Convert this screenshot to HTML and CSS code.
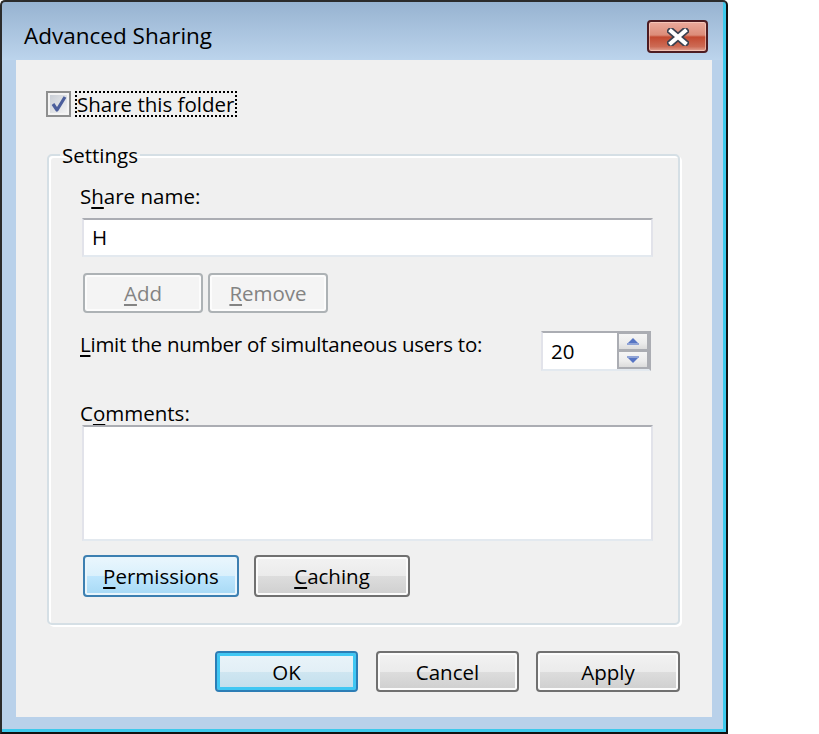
FILE: index.html
```html
<!DOCTYPE html>
<html>
<head>
<meta charset="utf-8">
<title>Advanced Sharing</title>
<link rel="stylesheet" href="styles.css">
</head>
<body>
<div class="window">
  <div class="titlebar">
    <span class="title">Advanced Sharing</span>
    <div class="close">
      <svg width="22" height="18" viewBox="0 0 22 18">
        <path d="M4 3 L18 15 M18 3 L4 15" stroke="#3b4150" stroke-width="7.5" stroke-linecap="square" fill="none"/>
        <path d="M4 3 L18 15 M18 3 L4 15" stroke="#ffffff" stroke-width="4" stroke-linecap="square" fill="none"/>
      </svg>
    </div>
  </div>
  <div class="client">
    <div class="check-row">
      <span class="checkbox">
        <svg width="25" height="26" viewBox="0 0 25 26">
          <defs>
            <linearGradient id="cbg" x1="0" y1="0" x2="1" y2="1">
              <stop offset="0" stop-color="#c9ced6"/>
              <stop offset="1" stop-color="#f2f2f2"/>
            </linearGradient>
          </defs>
          <rect x="1" y="1" width="23" height="24" fill="#f4f4f4" stroke="#8e8f8f" stroke-width="2"/>
          <rect x="4" y="4" width="17" height="18" fill="url(#cbg)"/>
          <path d="M7 13 L11 19 L19 6" stroke="#4b5e9c" stroke-width="3.2" fill="none" stroke-linejoin="round"/>
        </svg>
      </span>
      <span class="focus">Share this folder</span>
    </div>
    <fieldset class="group">
      <legend>Settings</legend>
      <div class="group-body">
        <div class="label first">S<u>h</u>are name:</div>
        <div class="textbox">H</div>
        <div class="btn-row small">
          <div class="btn disabled"><u>A</u>dd</div>
          <div class="btn disabled"><u>R</u>emove</div>
        </div>
        <div class="limit-row">
          <div class="label limit"><u>L</u>imit the number of simultaneous users to:</div>
          <div class="spin">
            <div class="spin-value">20</div>
            <div class="spin-btns">
              <div class="spin-btn">
                <svg width="12" height="7" viewBox="0 0 12 7"><path d="M6 0 L11 5 L1 5 Z" fill="#5775c4"/><rect x="0" y="5" width="12" height="2" fill="#8fa3d6"/></svg>
              </div>
              <div class="spin-btn">
                <svg width="12" height="7" viewBox="0 0 12 7"><rect x="0" y="0" width="12" height="2" fill="#8fa3d6"/><path d="M1 2 L11 2 L6 7 Z" fill="#5775c4"/></svg>
              </div>
            </div>
          </div>
        </div>
        <div class="label comments">C<u>o</u>mments:</div>
        <div class="textarea"></div>
        <div class="btn-row large">
          <div class="btn hot"><u>P</u>ermissions</div>
          <div class="btn"><u>C</u>aching</div>
        </div>
      </div>
    </fieldset>
    <div class="footer">
      <div class="btn default ok">OK</div>
      <div class="btn">Cancel</div>
      <div class="btn apply">Apply</div>
    </div>
  </div>
</div>
</body>
</html>
```

FILE: styles.css
```css
html, body {
  margin: 0;
  padding: 0;
  background: #ffffff;
}

body {
  font-family: "Open Sans", "Noto Sans", sans-serif;
  font-size: 20.5px;
  color: #000;
}

u {
  text-decoration-thickness: 2px;
  text-underline-offset: 3px;
}

.window {
  width: 728px;
  height: 734px;
  box-sizing: border-box;
  border-left: 2px solid #2b2b2b;
  border-top: 2px solid #2b2b2b;
  border-right: 2px solid #111;
  border-bottom: 2px solid #111;
  border-radius: 5px 5px 0 0;
  background: linear-gradient(to bottom, #97b3d1 0px, #bcd4ec 58px, #b9d1ea 58px, #b9d1ea 100%);
  box-shadow: inset -3px -3px 0 #3dc9eb;
  padding: 0 14px 15px 14px;
  display: flex;
  flex-direction: column;
}

.titlebar {
  height: 58px;
  display: flex;
  justify-content: space-between;
  align-items: flex-start;
  flex-shrink: 0;
}

.title {
  font-size: 22.5px;
  line-height: 28px;
  margin-top: 20px;
  margin-left: 8px;
  color: #000;
}

.close {
  width: 61px;
  height: 33px;
  box-sizing: border-box;
  margin-top: 18px;
  margin-right: 4px;
  border: 2px solid #4d1c22;
  border-radius: 4px;
  background: linear-gradient(to bottom, #eaaa9c 0%, #dc8c79 45%, #c34a31 52%, #cd6b55 85%, #e2a596 100%);
  box-shadow: inset 0 0 0 1px rgba(255, 220, 210, 0.55);
  display: flex;
  align-items: center;
  justify-content: center;
}

.close svg {
  display: block;
}

.client {
  flex: 1;
  background: #f0f0f0;
  padding: 31px 32px 0 30px;
  display: flex;
  flex-direction: column;
}

.check-row {
  display: flex;
  align-items: flex-start;
  height: 26px;
  gap: 4px;
}

.checkbox svg {
  display: block;
}

.focus {
  box-sizing: border-box;
  height: 26px;
  border: 2px dotted #000;
  line-height: 22px;
  padding: 0 1px 0 0;
}

.group {
  margin: 26px 0 0 1px;
  padding: 0;
  min-width: 0;
  border: 2px solid #d5dfe5;
  border-radius: 5px;
  box-shadow: inset 2px 2px 0 #ffffff, 2px 2px 0 #ffffff;
}

.group legend {
  margin-left: 11px;
  padding: 0 2px;
  line-height: 24px;
}

.group-body {
  padding: 0 25px 26px 33px;
  display: flex;
  flex-direction: column;
}

.label {
  line-height: 24px;
  margin-left: -2px;
}

.label.first {
  margin-top: 17px;
}

.textbox {
  box-sizing: border-box;
  height: 39px;
  margin-top: 10px;
  background: #fff;
  border: 2px solid;
  border-color: #abadb3 #e2e3ea #e3e9ef #e2e3ea;
  padding-left: 8px;
  line-height: 35px;
}

.btn-row {
  display: flex;
}

.btn-row.small {
  margin-top: 16px;
  margin-left: 1px;
  gap: 5px;
}

.btn-row.small .btn {
  width: 120px;
  height: 40px;
}

.btn-row.large {
  margin-top: 14px;
  margin-left: 1px;
  gap: 15px;
}

.btn-row.large .btn {
  width: 156px;
  height: 42px;
}

.btn {
  box-sizing: border-box;
  width: 143px;
  height: 41px;
  border: 2px solid #707070;
  border-radius: 4px;
  background: linear-gradient(to bottom, #f2f2f2 0%, #ebebeb 50%, #dddddd 50%, #cfcfcf 100%);
  box-shadow: inset 0 0 0 2px #fbfbfb;
  display: flex;
  align-items: center;
  justify-content: center;
  line-height: 24px;
  color: #000;
}

.btn.disabled {
  border-color: #adb2b5;
  background: #f4f4f4;
  box-shadow: inset 0 0 0 2px #fcfcfc;
  color: #838383;
}

.btn.hot {
  border-color: #3c7fb1;
  background: linear-gradient(to bottom, #eaf6fd 0%, #d9f0fc 50%, #bee6fd 50%, #a7d9f5 100%);
  box-shadow: inset 0 0 0 2px #e8f5fc;
}

.btn.default {
  border-color: #2c7db5;
  background: linear-gradient(to bottom, #eaf4f9 0%, #e2eff6 50%, #cfe6f1 50%, #c2deec 100%);
  box-shadow: inset 0 0 0 3px #40c7f3;
}

.limit-row {
  display: flex;
  align-items: flex-start;
  justify-content: space-between;
  margin-top: 18px;
}

.label.limit {
  margin-top: 1px;
  letter-spacing: -0.25px;
}

.spin {
  box-sizing: border-box;
  width: 110px;
  height: 40px;
  margin-right: 2px;
  background: #fff;
  border: 2px solid;
  border-color: #abadb3 #abadb3 #e3e9ef #e2e3ea;
  display: flex;
}

.spin-value {
  flex: 1;
  padding-left: 8px;
  line-height: 36px;
}

.spin-btns {
  width: 32px;
  box-sizing: border-box;
  background: #abadb3;
  padding: 1px 2px 2px 2px;
  display: flex;
  flex-direction: column;
  gap: 3px;
}

.spin-btn {
  flex: 1;
  background: linear-gradient(to bottom, #f5f5f5 0%, #ececec 60%, #dcdcdc 100%);
  display: flex;
  align-items: center;
  justify-content: center;
}

.spin-btn svg {
  display: block;
}

.label.comments {
  margin-top: 30px;
}

.textarea {
  box-sizing: border-box;
  height: 116px;
  background: #fff;
  border: 2px solid;
  border-color: #abadb3 #e2e3ea #e3e9ef #e2e3ea;
}

.footer {
  display: flex;
  justify-content: flex-end;
  gap: 17px;
  margin-top: 26px;
}

.footer .ok {
  margin-right: 1px;
}

.footer .apply {
  width: 144px;
}
```
